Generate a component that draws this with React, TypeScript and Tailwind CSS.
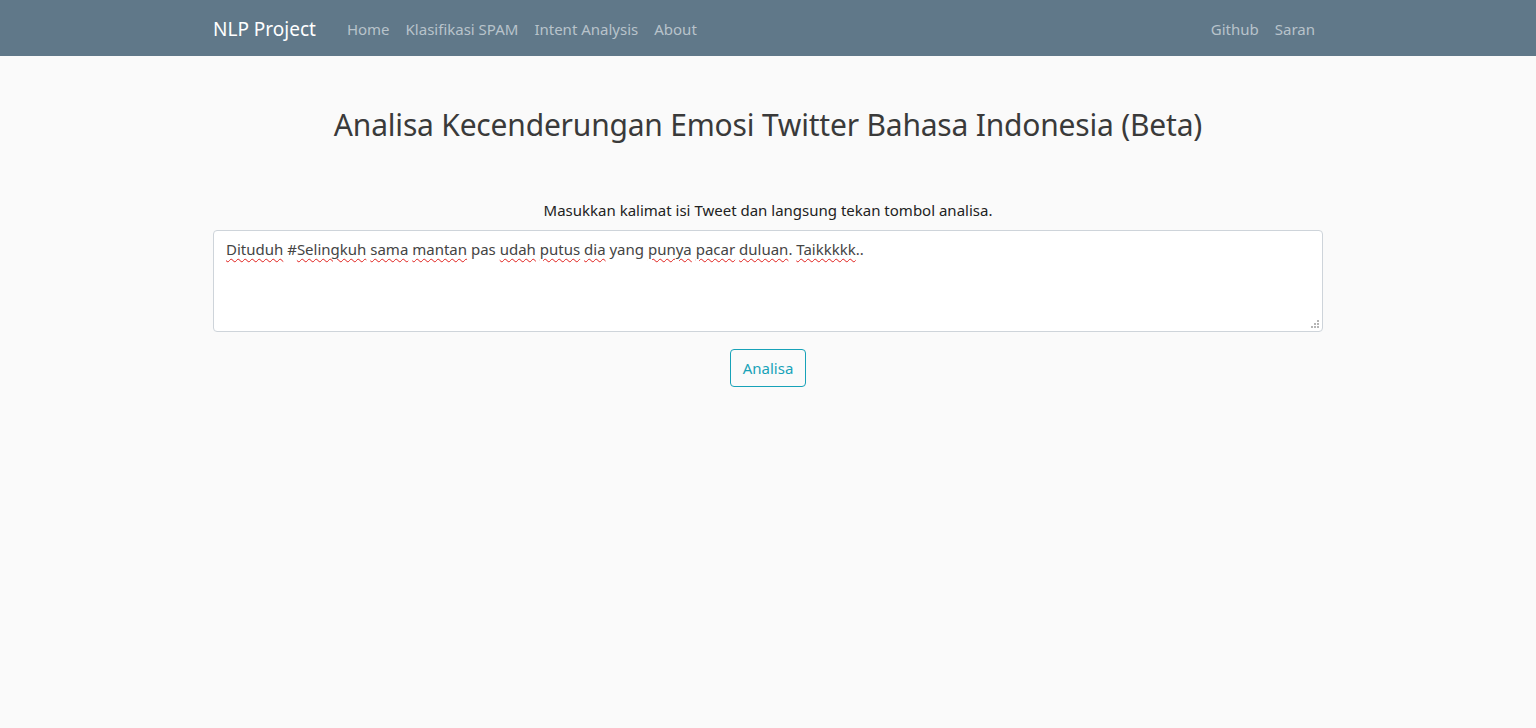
import React from "react";

const font = { fontFamily: '"Noto Sans", "Open Sans", sans-serif' };

function W({ children }: { children: React.ReactNode }) {
  return (
    <span className="underline decoration-wavy decoration-[#e0201c] decoration-1 underline-offset-[3px]">
      {children}
    </span>
  );
}

export default function App() {
  return (
    <div className="min-h-screen bg-[#fafafa] text-[#212529]" style={font}>
      <nav className="h-14 bg-[#607889]">
        <div className="mx-auto flex h-full w-[1110px] items-center pt-[2px]">
          <a className="mr-[31px] text-[19px] text-white">NLP Project</a>
          <div className="flex gap-[16px] text-[15px] text-[#b8c3cb]">
            <a>Home</a>
            <a>Klasifikasi SPAM</a>
            <a>Intent Analysis</a>
            <a>About</a>
          </div>
          <div className="ml-auto mr-[8px] flex gap-[16px] text-[15px] text-[#b8c3cb]">
            <a>Github</a>
            <a>Saran</a>
          </div>
        </div>
      </nav>
      <main className="mx-auto w-[1110px]">
        <h2 className="mt-[45px] text-center text-[30px] leading-[48px] tracking-[-0.2px] text-[#3a3a3a]">
          Analisa Kecenderungan Emosi Twitter Bahasa Indonesia (Beta)
        </h2>
        <p className="mt-[49px] text-center text-[15px] leading-[24px] text-[#222]">
          Masukkan kalimat isi Tweet dan langsung tekan tombol analisa.
        </p>
        <div className="relative mt-[8px] h-[102px] rounded-[4px] border border-[#ced4da] bg-white px-[12px] py-[6px] text-[15px] leading-[24px] text-[#444]">
          <W>Dituduh</W> #<W>Selingkuh</W> <W>sama</W> <W>mantan</W> pas <W>udah</W>{" "}
          <W>putus</W> <W>dia</W> yang <W>punya</W> <W>pacar</W> <W>duluan</W>.{" "}
          <W>Taikkkkk</W>..
          <svg className="absolute bottom-[2px] right-[2px]" width="9" height="9" viewBox="0 0 9 9">
            <g fill="#b5b5b5">
              <rect x="6" y="0" width="2" height="2" />
              <rect x="3" y="3" width="2" height="2" />
              <rect x="6" y="3" width="2" height="2" />
              <rect x="0" y="6" width="2" height="2" />
              <rect x="3" y="6" width="2" height="2" />
              <rect x="6" y="6" width="2" height="2" />
            </g>
          </svg>
        </div>
        <div className="mt-[17px] flex justify-center">
          <button className="h-[38px] rounded-[4px] border border-[#17a2b8] px-[12px] text-[15px] text-[#17a2b8]">
            Analisa
          </button>
        </div>
      </main>
    </div>
  );
}
